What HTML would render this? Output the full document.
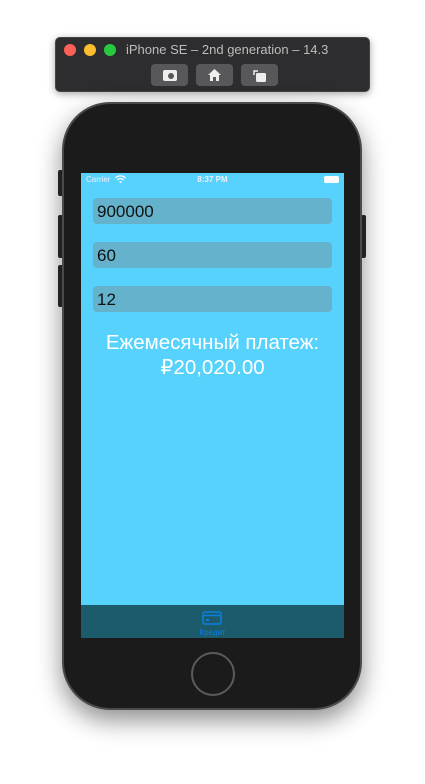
<!DOCTYPE html>
<html><head><meta charset="utf-8"><style>
*{margin:0;padding:0;box-sizing:border-box}
body{width:425px;height:784px;background:#fff;position:relative;overflow:hidden;font-family:"Liberation Sans","DejaVu Sans",sans-serif}
.abs{position:absolute}
#win{left:55px;top:37px;width:315px;height:55px;background:#2d2d2f;border-radius:5px;border:1px solid #444;box-shadow:0 2px 8px rgba(0,0,0,.35)}
.dot{width:12px;height:12px;border-radius:50%;top:6px}
.tb{top:26px;width:37px;height:22px;background:#58585b;border-radius:4px}
#phone{left:62px;top:102px;width:300px;height:608px;background:#1b1b1b;border-radius:48px;border:2px solid #4a4a4a;box-shadow:0 10px 25px rgba(0,0,0,.45)}
.sb{background:#2a2a2a;width:5px;border-radius:2px}
#screen{left:81px;top:173px;width:263px;height:465px;background:#57d2fc;overflow:hidden}
.fld{position:absolute;left:12px;width:239px;height:26px;background:#64b2cc;border-radius:4px;font-size:17px;color:#111;padding:4px 0 0 4px}
#lbl{position:absolute;left:0;width:263px;top:157px;text-align:center;color:#fff;font-size:20.5px;line-height:25px}
#tab{position:absolute;left:0;top:432px;width:263px;height:33px;background:#1c5b6b}
</style></head><body>
<div id="win" class="abs">
<div class="abs dot" style="left:8px;background:#fe5f57"></div>
<div class="abs dot" style="left:28px;background:#febc2e"></div>
<div class="abs dot" style="left:48px;background:#28c840"></div>
<div class="abs" style="left:70px;top:4px;color:#bdbdbd;font-size:13px;white-space:nowrap">iPhone SE – 2nd generation – 14.3</div>
<div class="abs tb" style="left:95px"><svg width="37" height="22"><rect x="12" y="6" width="14" height="11" rx="2" fill="#eee"/><circle cx="20" cy="12" r="3" fill="#58585b"/></svg></div>
<div class="abs tb" style="left:140px"><svg width="37" height="22"><path d="M12 11 L18.5 5 L25 11 L23 11 L23 17 L14 17 L14 11Z" fill="#eee"/><rect x="17" y="13" width="3" height="4" fill="#58585b"/></svg></div>
<div class="abs tb" style="left:185px"><svg width="37" height="22"><rect x="15" y="9" width="10" height="9" rx="1.5" fill="#eee"/><path d="M13 11 V7 H17" stroke="#eee" stroke-width="1.5" fill="none"/></svg></div>
</div>
<div class="abs sb" style="left:58px;top:170px;height:26px"></div>
<div class="abs sb" style="left:58px;top:215px;height:43px"></div>
<div class="abs sb" style="left:58px;top:265px;height:42px"></div>
<div class="abs sb" style="left:361px;top:215px;height:43px"></div>
<div id="phone" class="abs"></div>
<div class="abs" style="left:191px;top:652px;width:44px;height:44px;border-radius:50%;border:2px solid #5b5b5b"></div>
<div id="screen" class="abs">
<div class="abs" style="left:5px;top:2px;font-size:8px;color:#eef">Carrier</div>
<svg class="abs" style="left:34px;top:2px" width="11" height="8"><path d="M0.5 3 A7 7 0 0 1 10.5 3" stroke="#fff" stroke-width="1.3" fill="none"/><path d="M2.5 5 A4 4 0 0 1 8.5 5" stroke="#fff" stroke-width="1.3" fill="none"/><circle cx="5.5" cy="7" r="1" fill="#fff"/></svg>
<div class="abs" style="left:0;width:263px;top:2px;text-align:center;font-size:8px;color:#eef;font-weight:bold">8:37 PM</div>
<div class="abs" style="left:243px;top:3px;width:15px;height:7px;background:#fff;border-radius:2px"></div>
<div class="fld" style="top:25px">900000</div>
<div class="fld" style="top:69px">60</div>
<div class="fld" style="top:113px">12</div>
<div id="lbl">Ежемесячный платеж:<br>₽20,020.00</div>
<div id="tab">
<svg class="abs" style="left:121px;top:6px" width="20" height="14"><rect x="1" y="1" width="18" height="12" rx="2" stroke="#0a7fe0" stroke-width="1.5" fill="none"/><line x1="1" y1="4.5" x2="19" y2="4.5" stroke="#0a7fe0" stroke-width="1.5"/><rect x="4" y="8" width="3" height="2" fill="#0a7fe0"/></svg>
<div class="abs" style="left:0;width:263px;top:23px;text-align:center;font-size:8px;color:#0a7fe0">Кредит</div>
</div>
</div>
</body></html>
